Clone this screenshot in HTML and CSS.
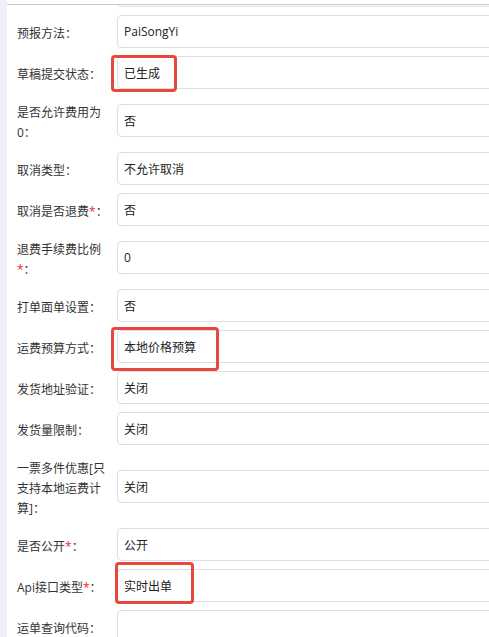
FILE: index.html
```html
<!DOCTYPE html>
<html lang="zh-CN">
<head>
    <meta charset="UTF-8">
    <meta name="viewport" content="width=device-width, initial-scale=1.0">
    <title>渠道设置</title>
    <link rel="stylesheet" href="styles.css">
</head>
<body>
    <div class="sidebar"></div>
    <div class="main">
        <div class="panel">
            <form class="form">
                <div class="row">
                    <label class="label"></label>
                    <div class="control"><input class="input" type="text" value="" readonly></div>
                </div>
                <div class="row">
                    <label class="label">预报方法：</label>
                    <div class="control"><input class="input" type="text" value="PaiSongYi" readonly></div>
                </div>
                <div class="row">
                    <label class="label">草稿提交状态：</label>
                    <div class="control">
                        <input class="input" type="text" value="已生成" readonly>
                        <span class="mark mark-draft"></span>
                    </div>
                </div>
                <div class="row">
                    <label class="label">是否允许费用为0：</label>
                    <div class="control"><input class="input" type="text" value="否" readonly></div>
                </div>
                <div class="row">
                    <label class="label">取消类型：</label>
                    <div class="control"><input class="input" type="text" value="不允许取消" readonly></div>
                </div>
                <div class="row">
                    <label class="label">取消是否退费<span class="req">*</span>：</label>
                    <div class="control"><input class="input" type="text" value="否" readonly></div>
                </div>
                <div class="row">
                    <label class="label">退费手续费比例<span class="req">*</span>：</label>
                    <div class="control"><input class="input" type="text" value="0" readonly></div>
                </div>
                <div class="row">
                    <label class="label">打单面单设置：</label>
                    <div class="control"><input class="input" type="text" value="否" readonly></div>
                </div>
                <div class="row">
                    <label class="label">运费预算方式：</label>
                    <div class="control">
                        <input class="input" type="text" value="本地价格预算" readonly>
                        <span class="mark mark-budget"></span>
                    </div>
                </div>
                <div class="row">
                    <label class="label">发货地址验证：</label>
                    <div class="control"><input class="input" type="text" value="关闭" readonly></div>
                </div>
                <div class="row">
                    <label class="label">发货量限制：</label>
                    <div class="control"><input class="input" type="text" value="关闭" readonly></div>
                </div>
                <div class="row">
                    <label class="label">一票多件优惠[只支持本地运费计算]：</label>
                    <div class="control"><input class="input" type="text" value="关闭" readonly></div>
                </div>
                <div class="row">
                    <label class="label">是否公开<span class="req">*</span>：</label>
                    <div class="control"><input class="input" type="text" value="公开" readonly></div>
                </div>
                <div class="row">
                    <label class="label">Api接口类型<span class="req">*</span>：</label>
                    <div class="control">
                        <input class="input" type="text" value="实时出单" readonly>
                        <span class="mark mark-api"></span>
                    </div>
                </div>
                <div class="row">
                    <label class="label">运单查询代码：</label>
                    <div class="control"><input class="input" type="text" value="" readonly></div>
                </div>
            </form>
        </div>
    </div>
</body>
</html>
```

FILE: styles.css
```css
html, body {
    height: 100%;
}
body {
    margin: 0;
    display: flex;
    overflow: hidden;
    background-color: #fff;
    font-family: "Open Sans", "Noto Sans CJK SC", sans-serif;
    font-size: 12px;
    color: #333;
}
.sidebar {
    width: 7px;
    flex-shrink: 0;
    background-color: #f0f1f6; /* faixa lateral */
}
.main {
    flex: 1;
    padding-top: 4px;
    min-width: 0;
}
.panel {
    height: 100%;
    border-top: 1px solid #c9c9c9;
    overflow: hidden;
}
.form {
    margin-top: -31px; /* conteúdo rolado */
    padding-left: 10px;
}
.row {
    display: flex;
    align-items: center;
    margin-bottom: 8px;
}
.label {
    width: 96px;
    flex-shrink: 0;
    padding: 6px 4px 1px 0;
    line-height: 20px;
    color: #333;
}
.req {
    color: #f5222d;
}
.control {
    position: relative;
    flex: 1;
    margin-right: -40px;
}
.input {
    display: block;
    width: 100%;
    height: 33px;
    box-sizing: border-box;
    padding: 0 6px;
    border: 1px solid #dcdfe6;
    border-radius: 4px;
    background-color: #fff;
    font-family: inherit;
    font-size: 12px;
    color: #222;
    outline: none;
}
/* marcações vermelhas sobre os campos */
.mark {
    position: absolute;
    box-sizing: border-box;
    border: 3px solid #e8473c;
    border-radius: 4px;
    pointer-events: none;
}
.mark-draft {
    left: -6px;
    top: -1px;
    width: 66px;
    height: 37px;
}
.mark-budget {
    left: -6px;
    top: -3px;
    width: 108px;
    height: 44px;
}
.mark-api {
    left: -2px;
    top: -7px;
    width: 79px;
    height: 42px;
}
```
